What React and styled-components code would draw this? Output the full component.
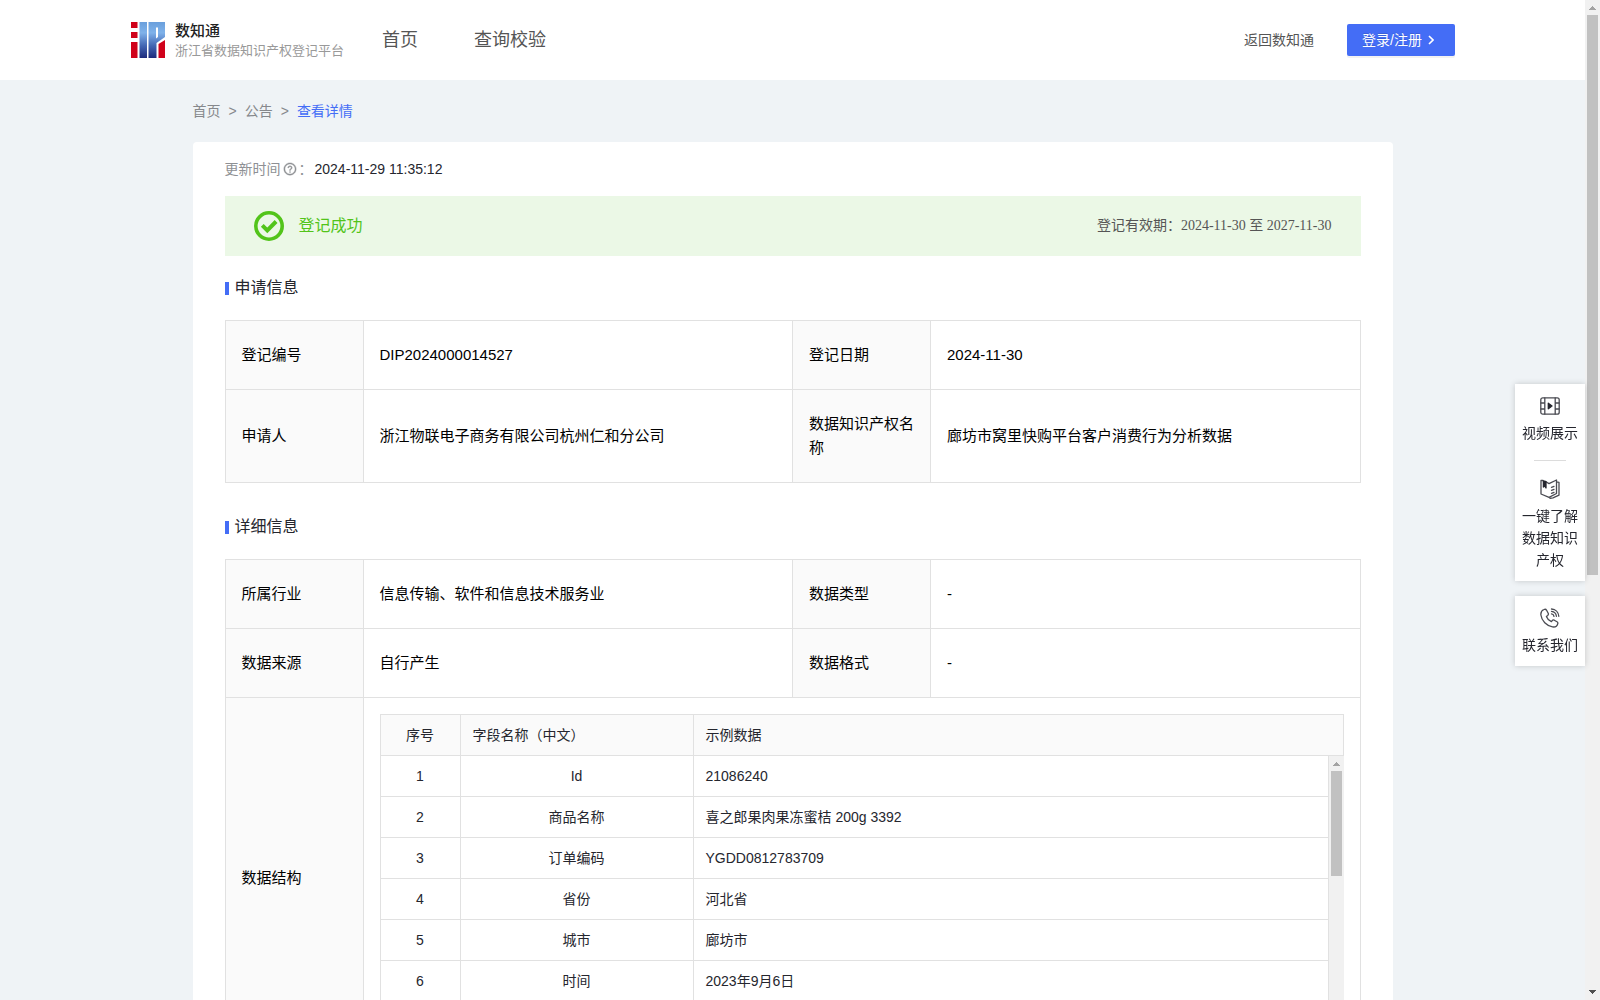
import React from "react";
import styled, { createGlobalStyle } from "styled-components";
import { AiOutlineQuestionCircle } from "react-icons/ai";

const GlobalStyle = createGlobalStyle`
  * {
    box-sizing: border-box;
  }
  body {
    margin: 0;
    background: #eff3f6;
    color: #25262e;
    font-family: "Liberation Sans", "Noto Sans CJK SC", sans-serif;
    font-size: 14px;
    line-height: 22px;
  }
  a {
    color: inherit;
    text-decoration: none;
  }
`;

const Page = styled.div`
  display: flex;
  height: 100vh;
  overflow: hidden;
`;

const Content = styled.div`
  flex: 1;
  min-width: 0;
`;

const Header = styled.header`
  display: flex;
  align-items: center;
  height: 80px;
  padding: 0 130px;
  background: #fff;
`;

const Brand = styled.a`
  display: flex;
  align-items: center;
  gap: 9px;
`;

const BrandText = styled.div`
  padding-top: 2px;
`;

const BrandName = styled.div`
  color: #222;
  font-size: 15px;
  font-weight: 500;
  line-height: 20px;
`;

const BrandSub = styled.div`
  color: #999;
  font-size: 13px;
  line-height: 20px;
`;

const Nav = styled.nav`
  display: flex;
  gap: 56px;
  margin-left: 38px;
  color: #555;
  font-size: 18px;
`;

const HeaderRight = styled.div`
  display: flex;
  align-items: center;
  gap: 33px;
  margin-left: auto;
  color: #555;
`;

const LoginButton = styled.button`
  display: flex;
  align-items: center;
  gap: 6px;
  height: 32px;
  padding: 0 21px 0 15px;
  border: none;
  border-radius: 2px;
  background: #446df6;
  color: #fff;
  font: inherit;
  text-shadow: 0 -1px 0 rgba(0, 0, 0, 0.12);
  box-shadow: 0 2px 0 rgba(0, 0, 0, 0.05);
`;

const Container = styled.main`
  max-width: 1200px;
  margin: 0 auto;
`;

const Breadcrumb = styled.nav`
  display: flex;
  gap: 8px;
  padding: 20px 0;
  color: #86888c;
`;

const Current = styled.a`
  color: #446df6;
`;

const Card = styled.div`
  padding: 16px 32px;
  border-radius: 4px;
  background: #fff;
`;

const UpdateTime = styled.div`
  display: flex;
  align-items: center;
  gap: 2px;
  margin-bottom: 16px;
  color: #8e9094;
`;

const HelpIcon = styled(AiOutlineQuestionCircle)`
  stroke: currentColor;
  stroke-width: 30px;
`;

const UpdateValue = styled.span`
  color: #25262e;
`;

const Banner = styled.div`
  display: flex;
  align-items: center;
  gap: 15px;
  height: 60px;
  padding: 0 29px;
  background: #ebf8e6;
`;

const BannerText = styled.span`
  color: #52c41a;
  font-size: 16px;
`;

const Validity = styled.span`
  margin-left: auto;
  color: #555;
  font-family: "Liberation Serif", "Noto Sans CJK SC", serif;
`;

const SectionTitle = styled.h2`
  display: flex;
  align-items: center;
  gap: 6px;
  margin: 20px 0;
  font-size: 16px;
  font-weight: 400;
  line-height: 24px;

  &::before {
    content: "";
    width: 4px;
    height: 13px;
    background: #446df6;
  }
`;

const InfoTable = styled.table`
  width: 100%;
  margin-bottom: 32px;
  border-collapse: collapse;
  table-layout: fixed;
  color: #000;
  font-size: 15px;
  line-height: 24px;
`;

const Label = styled.th`
  width: 138px;
  padding: 22px 16px;
  border: 1px solid #e1e1e1;
  background: #fafafa;
  font-weight: 400;
  text-align: left;
`;

const Value = styled.td`
  padding: ${(props) => (props.$nested ? "16px" : "22px 16px")};
  border: 1px solid #e1e1e1;
`;

const Fields = styled.div`
  border-top: 1px solid #e1e1e1;
  border-left: 1px solid #e1e1e1;
  color: #25262e;
  font-size: 14px;
  line-height: 22px;
`;

const FieldTable = styled.table`
  width: 100%;
  border-spacing: 0;
  table-layout: fixed;
`;

const FieldHead = styled.th`
  width: ${(props) => props.$width || "auto"};
  height: 41px;
  padding: 0 12px;
  border: solid #e1e1e1;
  border-width: 0 1px 1px 0;
  background: #fafafa;
  font-weight: 400;
  text-align: ${(props) => props.$align || "left"};
`;

const FieldCell = styled.td`
  width: ${(props) => props.$width || "auto"};
  height: 41px;
  padding: 0 12px;
  border: solid #e1e1e1;
  border-width: 0 1px 1px 0;
  text-align: ${(props) => props.$align || "left"};
`;

const FieldBody = styled.div`
  display: flex;
  align-items: stretch;
  height: 286px;
  overflow: hidden;
`;

const FieldRows = styled.div`
  flex: 1;
`;

const Bar = styled.div`
  display: flex;
  flex: none;
  flex-direction: column;
  align-items: center;
  width: 15px;
  background: #f1f1f1;
`;

const BarArrow = styled.svg`
  flex: none;
  width: 15px;
  height: 15px;
`;

const BarTrack = styled.div`
  flex: 1;
  width: 11px;
`;

const BarThumb = styled.div`
  height: ${(props) => props.$size};
  background: #c1c1c1;
`;

const SideBar = styled.aside`
  position: fixed;
  top: 384px;
  right: 15px;
  display: flex;
  flex-direction: column;
  gap: 15px;
  width: 70px;
`;

const SideCard = styled.div`
  background: #fff;
  box-shadow: 0 0 6px rgba(0, 0, 0, 0.18);
`;

const SideItem = styled.a`
  display: flex;
  flex-direction: column;
  align-items: center;
  gap: 6px;
  padding: 12px 7px 10px;
  text-align: center;
`;

const SideDivider = styled.hr`
  width: 32px;
  height: 1px;
  margin: 6px auto;
  border: none;
  background: #dcdcdc;
`;

const SideIcon = styled.svg`
  width: 20px;
  height: 20px;
  fill: none;
  stroke: #4a4b52;
  stroke-width: 1.3;
  stroke-linecap: round;
  stroke-linejoin: round;
`;

const fields = [
  ["Id", "21086240"],
  ["商品名称", "喜之郎果肉果冻蜜桔 200g 3392"],
  ["订单编码", "YGDD0812783709"],
  ["省份", "河北省"],
  ["城市", "廊坊市"],
  ["时间", "2023年9月6日"],
];

const Logo = () => (
  <svg width="36" height="36" viewBox="-1 0 36 36" aria-hidden="true">
    <defs>
      <linearGradient id="logoBlue" x1="0" y1="0" x2="0" y2="36" gradientUnits="userSpaceOnUse">
        <stop offset="0" stopColor="#6a9fdc" />
        <stop offset="0.3" stopColor="#7fb2ea" />
        <stop offset="0.65" stopColor="#4468b4" />
        <stop offset="1" stopColor="#1d2a7c" />
      </linearGradient>
    </defs>
    <path fill="#d0021b" d="M0 0h6.500v6H0zM0 10h6.500v6H0zM0 20h6.500v16H0zM27.500 22l6.500-4v18h-6.500z" />
    <path
      fill="url(#logoBlue)"
      fillRule="evenodd"
      d="M8.500 0h7.500v36H8.500zM17.500 0h16.500v15l-8.500 6v15h-8zM25 5.500v11l2-1.500V5.500z"
    />
  </svg>
);

const CheckIcon = () => (
  <svg width="30" height="30" viewBox="0 0 30 30" fill="none" stroke="#52c41a" aria-hidden="true">
    <circle cx="15" cy="15" r="13.2" strokeWidth="3.6" />
    <path d="M8.3 14.3l5 5 8.800-8.800" strokeWidth="4" />
  </svg>
);

const VideoIcon = () => (
  <SideIcon viewBox="0 0 20 20">
    <rect x="0.8" y="1.8" width="18.4" height="16.4" rx="2" />
    <path d="M4.8 2v16M15.2 2v16M1 7h3.8M1 13h3.8M15.2 7H19M15.2 13H19" />
    <path d="M8.3 7.2v5.6L12 10z" fill="#25262e" stroke="#25262e" />
  </SideIcon>
);

const BookIcon = () => (
  <SideIcon viewBox="0 0 20 20">
    <path d="M5.500 2.500L9 4.600 16.500 1v13.500L9 18.300 1 15V1.500h2M16.500 2.800l2.500.6v12.800l-6 2.600-3 .6" />
    <path d="M11.500 8.300l2.500-1M11.500 11.300l2.500-1M11.500 14.300l2.500-1" />
    <path d="M3.400 2v6l1.300-1 1.300 2V2.600z" fill="#25262e" stroke="#25262e" />
  </SideIcon>
);

const PhoneIcon = () => (
  <SideIcon viewBox="0 0 20 20">
    <path d="M4 1.500C1.800 2.400.6 4.400.9 7c.8 6 5.600 10.900 11.600 11.900 2.600.4 4.700-.9 5.300-3.300.2-.8-.1-1.400-.8-1.800l-2.700-1.600c-.8-.4-1.600-.3-2.100.4l-.8 1.100c-2.300-1-4.100-2.900-5-5.300l1.300-1c.7-.6.9-1.300.5-2.100L6.600 2.300C6.100 1.400 5.100 1 4 1.500z" />
    <path d="M11.500 1c4 .2 7 3.200 7.300 7.300M11.500 3.400c2.700.3 4.600 2.200 4.900 4.900" />
    <path d="M11.500 5.800c1.400.2 2.300 1.100 2.500 2.500" />
  </SideIcon>
);

const ScrollBar = ({ size }) => (
  <Bar aria-hidden="true">
    <BarArrow viewBox="0 0 15 15" shapeRendering="crispEdges">
      <path fill="#a3a3a3" d="M7 6h1v1h1v1h1v1h1v1H4V9h1V8h1V7h1z" />
    </BarArrow>
    <BarTrack>
      <BarThumb $size={size} />
    </BarTrack>
    <BarArrow viewBox="0 0 15 15" shapeRendering="crispEdges">
      <path fill="#505050" d="M4 5h7v1h-1v1H9v1H8v1H7V8H6V7H5V6H4z" />
    </BarArrow>
  </Bar>
);

const InfoRow = ({ items }) => (
  <tr>
    {items.map(([label, value]) => (
      <React.Fragment key={label}>
        <Label scope="row">{label}</Label>
        <Value>{value}</Value>
      </React.Fragment>
    ))}
  </tr>
);

const DataFields = () => (
  <Fields>
    <FieldTable>
      <thead>
        <tr>
          <FieldHead $width="80px" $align="center">序号</FieldHead>
          <FieldHead $width="233px">字段名称（中文）</FieldHead>
          <FieldHead>示例数据</FieldHead>
        </tr>
      </thead>
    </FieldTable>
    <FieldBody>
      <FieldRows>
        <FieldTable>
          <tbody>
            {fields.map(([name, sample], i) => (
              <tr key={name}>
                <FieldCell $width="80px" $align="center">{i + 1}</FieldCell>
                <FieldCell $width="233px" $align="center">{name}</FieldCell>
                <FieldCell>{sample}</FieldCell>
              </tr>
            ))}
          </tbody>
        </FieldTable>
      </FieldRows>
      <ScrollBar size="41%" />
    </FieldBody>
  </Fields>
);

const App = () => (
  <Page>
    <GlobalStyle />
    <Content>
      <Header>
        <Brand href="#">
          <Logo />
          <BrandText>
            <BrandName>数知通</BrandName>
            <BrandSub>浙江省数据知识产权登记平台</BrandSub>
          </BrandText>
        </Brand>
        <Nav>
          <a href="#">首页</a>
          <a href="#">查询校验</a>
        </Nav>
        <HeaderRight>
          <a href="#">返回数知通</a>
          <LoginButton type="button">
            登录/注册
            <svg width="6" height="10" viewBox="0 0 6 10" fill="none" stroke="#fff" strokeWidth="1.6" aria-hidden="true">
              <path d="M1 1l4 4-4 4" />
            </svg>
          </LoginButton>
        </HeaderRight>
      </Header>
      <Container>
        <Breadcrumb>
          <a href="#">首页</a>
          <span>&gt;</span>
          <a href="#">公告</a>
          <span>&gt;</span>
          <Current href="#">查看详情</Current>
        </Breadcrumb>
        <Card>
          <UpdateTime>
            更新时间
            <HelpIcon size={14} />
            <span>：</span>
            <UpdateValue>2024-11-29 11:35:12</UpdateValue>
          </UpdateTime>
          <Banner>
            <CheckIcon />
            <BannerText>登记成功</BannerText>
            <Validity>登记有效期：2024-11-30 至 2027-11-30</Validity>
          </Banner>
          <SectionTitle>申请信息</SectionTitle>
          <InfoTable>
            <tbody>
              <InfoRow items={[["登记编号", "DIP2024000014527"], ["登记日期", "2024-11-30"]]} />
              <InfoRow
                items={[
                  ["申请人", "浙江物联电子商务有限公司杭州仁和分公司"],
                  ["数据知识产权名称", "廊坊市窝里快购平台客户消费行为分析数据"],
                ]}
              />
            </tbody>
          </InfoTable>
          <SectionTitle>详细信息</SectionTitle>
          <InfoTable>
            <tbody>
              <InfoRow items={[["所属行业", "信息传输、软件和信息技术服务业"], ["数据类型", "-"]]} />
              <InfoRow items={[["数据来源", "自行产生"], ["数据格式", "-"]]} />
              <tr>
                <Label scope="row">数据结构</Label>
                <Value colSpan={3} $nested>
                  <DataFields />
                </Value>
              </tr>
            </tbody>
          </InfoTable>
        </Card>
      </Container>
    </Content>
    <SideBar>
      <SideCard>
        <SideItem href="#">
          <VideoIcon />
          视频展示
        </SideItem>
        <SideDivider />
        <SideItem href="#">
          <BookIcon />
          一键了解数据知识产权
        </SideItem>
      </SideCard>
      <SideCard>
        <SideItem href="#">
          <PhoneIcon />
          联系我们
        </SideItem>
      </SideCard>
    </SideBar>
    <ScrollBar size="calc(100vh * 0.56)" />
  </Page>
);

export default App;
